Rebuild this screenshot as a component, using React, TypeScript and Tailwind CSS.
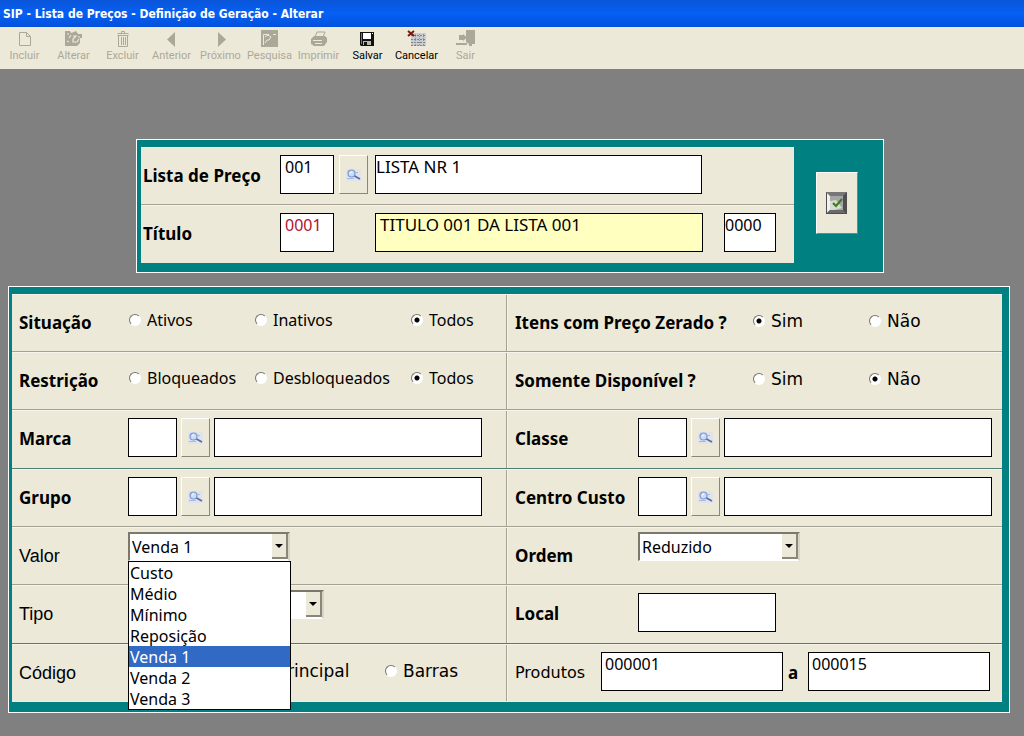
import React, { useState } from "react";

const NOTO = "font-['Noto_Sans',sans-serif]";
const NOTO_RADIO = "font-['Noto_Sans',sans-serif] text-[16px] leading-6";
const DEJAVU_RADIO = "font-['DejaVu_Sans',sans-serif] text-[17px] leading-[26px]";

function PageIcon() {
  return (
    <svg width="16" height="18" viewBox="0 0 16 18" fill="none" stroke="currentColor" aria-hidden="true">
      <path d="M2.5 2.5h7l4 4v9h-11z M9.5 2.5v4h4" />
    </svg>
  );
}

function EditIcon() {
  return (
    <svg width="20" height="18" viewBox="0 0 20 18" aria-hidden="true">
      <path d="M1 1h5l1 2 3-1 2-1 2 3h4v4h-2v5l-3 3H1z" fill="currentColor" />
      <path d="M3 4h2M7 5l-2 3M9 6h3l-3 3v3h4l2-3M3 11l2 1M14 3l2-1M14 7h2" stroke="#ece9d8" strokeWidth="1.2" fill="none" />
    </svg>
  );
}

function TrashIcon() {
  return (
    <svg width="16" height="18" viewBox="0 0 16 18" fill="none" stroke="currentColor" aria-hidden="true">
      <path d="M2.5 3.5h11M2.5 5.5h11M6.5 3.5v-2h3v2M3.500 5.5v11h9v-11M6.5 7v8M8.5 7v8M10.5 7v8" />
    </svg>
  );
}

function PreviousIcon() {
  return (
    <svg width="16" height="18" viewBox="0 0 16 18" fill="currentColor" aria-hidden="true">
      <path d="M11 2v15L3 9.500z" />
    </svg>
  );
}

function NextIcon() {
  return (
    <svg width="16" height="18" viewBox="0 0 16 18" fill="currentColor" aria-hidden="true">
      <path d="M5 2v15l8-7.500z" />
    </svg>
  );
}

function SearchPanelIcon() {
  return (
    <svg width="18" height="18" viewBox="0 0 18 18" aria-hidden="true">
      <path d="M0 0h17v17H0z" fill="currentColor" />
      <path d="M2.500 15V4.500H8M4 7l3-2 3 2-2 3H6l-2 3M12 4.500h3" stroke="#ece9d8" fill="none" />
    </svg>
  );
}

function PrinterIcon() {
  return (
    <svg width="18" height="18" viewBox="0 0 18 18" aria-hidden="true">
      <path d="M5 7l2-5h8l-2 5" fill="#ece9d8" stroke="currentColor" />
      <path d="M1 9l3-3h11l2 2v4l-3 4H4l-3-2z" fill="currentColor" />
      <path d="M3 10.500h9M5 13.500h7M8 4.500h4" stroke="#ece9d8" />
    </svg>
  );
}

function DiskIcon() {
  return (
    <svg width="16" height="18" viewBox="0 0 16 18" aria-hidden="true">
      <path d="M0 2h14v14H1l-1-1z" fill="#111" />
      <path d="M3 3h8v6H3z" fill="#fff" />
      <path d="M3 11h8v4H3z" fill="#b9b9a8" />
      <path d="M4 12h3v3H4z" fill="#111" />
      <path d="M12 3h1v1h-1z" fill="#fff" />
      <path d="M1 3h1v11H1z" fill="#77775f" />
    </svg>
  );
}

function CancelIcon() {
  return (
    <svg width="20" height="18" viewBox="0 0 20 18" aria-hidden="true">
      <path d="M4 3h15v13H4z" fill="#c9cdd2" />
      <path d="M4 5.500h15M4 9.500h15M4 12.500h15M4 15.500h15" stroke="#7d848c" strokeDasharray="2 1" />
      <path d="M8.500 4v12M12.500 4v12M16.500 4v12" stroke="#8f969c" strokeDasharray="1 1" />
      <path d="M1 1l6 5M7 1L1 6" stroke="#7a1712" strokeWidth="2" />
    </svg>
  );
}

function ExitIcon() {
  return (
    <svg width="20" height="18" viewBox="0 0 20 18" fill="currentColor" aria-hidden="true">
      <path d="M10 0h9v14h-3v2h-3v-2l-3-2z" />
      <path d="M3 5h4V4l4 3.500L7 11v-1H3zM0 13h11v2H0z" />
    </svg>
  );
}

function LensIcon() {
  return (
    <svg width="16" height="12" viewBox="0 0 16 12" fill="none" aria-hidden="true">
      <path d="M0 0h15v12H0z" fill="#e2e3e6" />
      <circle cx="5.500" cy="4.500" r="3.500" fill="#c9dcf8" stroke="#7f97d2" strokeWidth="1.200" />
      <path d="M4 4.500a2 2 0 0 1 2-1.500" stroke="#fff" />
      <path d="M8.500 7l5.500 3" stroke="#4f6cb5" strokeWidth="1.700" />
      <path d="M1 9.500h7M9 3.500h3" stroke="#a9b9de" />
    </svg>
  );
}

function CheckIcon() {
  return (
    <svg width="21" height="22" viewBox="0 0 21 22" aria-hidden="true">
      <path d="M0 0h21v22H0z" fill="#4f4f52" />
      <path d="M0 0h21l-4 4H4z" fill="#77777a" />
      <path d="M1 1v20l3-3V4z" fill="#f1f1f1" />
      <path d="M1 21l3-3h13l3 3z" fill="#6a6a6c" />
      <path d="M4 4h13v14H4z" fill="#a4a8a4" />
      <path d="M4 9l6-1 6 8-8 2H4z" fill="#d6dcd0" />
      <path d="M7 11l3 3 6-7" stroke="#3f7d22" strokeWidth="2.200" fill="none" />
    </svg>
  );
}

const tools = [
  { label: "Incluir", icon: <PageIcon />, enabled: false },
  { label: "Alterar", icon: <EditIcon />, enabled: false },
  { label: "Excluir", icon: <TrashIcon />, enabled: false },
  { label: "Anterior", icon: <PreviousIcon />, enabled: false },
  { label: "Próximo", icon: <NextIcon />, enabled: false },
  { label: "Pesquisa", icon: <SearchPanelIcon />, enabled: false },
  { label: "Imprimir", icon: <PrinterIcon />, enabled: false },
  { label: "Salvar", icon: <DiskIcon />, enabled: true },
  { label: "Cancelar", icon: <CancelIcon />, enabled: true },
  { label: "Sair", icon: <ExitIcon />, enabled: false },
];

function Field({
  label,
  value = "",
  size = "text-[16px]",
  className,
}: {
  label: string;
  value?: string;
  size?: string;
  className: string;
}) {
  return (
    <input
      type="text"
      aria-label={label}
      defaultValue={value}
      className={`h-[39px] min-w-0 border border-black pb-4 leading-5 outline-none ${size} ${className}`}
    />
  );
}

function LookupButton({ label, className }: { label: string; className: string }) {
  return (
    <button
      type="button"
      aria-label={label}
      className={`flex h-[39px] w-[29px] shrink-0 items-center justify-center border border-t-white border-r-[#8a877a] border-b-[#8a877a] border-l-white bg-[#ece9d8] ${className}`}
    >
      <LensIcon />
    </button>
  );
}

function RadioGroup({
  name,
  options,
  initial,
  font,
}: {
  name: string;
  options: { label: string; width: string }[];
  initial: string;
  font: string;
}) {
  const [selected, setSelected] = useState(initial);
  return (
    <div role="radiogroup" aria-label={name} className={`flex pt-[13px] pl-px ${font}`}>
      {options.map((option) => (
        <label key={option.label} className={`flex items-center gap-1.5 whitespace-nowrap ${option.width}`}>
          <input
            type="radio"
            name={name}
            checked={selected === option.label}
            onChange={() => setSelected(option.label)}
            className="size-3 shrink-0 appearance-none rounded-full border border-t-[#77756a] border-r-white border-b-white border-l-[#77756a] bg-white checked:bg-[radial-gradient(circle,#000_2px,#fff_3px)]"
          />
          {option.label}
        </label>
      ))}
    </div>
  );
}

function Combo({
  id,
  options,
  width,
  value,
  onSelect,
}: {
  id: string;
  options: string[];
  width: string;
  value: string;
  onSelect?: (value: string) => void;
}) {
  return (
    <div className={`relative mt-1 h-[29px] ${width}`}>
      <select
        id={id}
        value={value}
        onChange={(event) => onSelect?.(event.target.value)}
        className="h-full w-full appearance-none border-t-2 border-r-2 border-b border-l-2 border-t-[#7b796d] border-r-[#d8d4c4] border-b-white border-l-[#7b796d] bg-white pl-0.5 text-[16px] leading-6 outline-none"
      >
        {options.map((option) => (
          <option key={option}>{option}</option>
        ))}
      </select>
      <span className="pointer-events-none absolute top-0.5 right-0.5 bottom-0.5 flex w-4 items-center justify-center border-r-2 border-b-2 border-[#8a877a] bg-[#ece9d8]">
        <svg width="8" height="4" viewBox="0 0 8 4" aria-hidden="true">
          <path d="M0 0h8L4 4z" fill="#000" />
        </svg>
      </span>
    </div>
  );
}

const valueOptions = ["Custo", "Médio", "Mínimo", "Reposição", "Venda 1", "Venda 2", "Venda 3"];

function ValueCombo() {
  const [value, setValue] = useState("Venda 1");
  return (
    <div className="relative">
      <Combo id="valor" options={valueOptions} width="w-[162px]" value={value} onSelect={setValue} />
      <ul
        role="listbox"
        aria-label="Valor"
        className="absolute top-full left-0 z-10 w-[163px] border border-black bg-white"
      >
        {valueOptions.map((option) => (
          <li
            key={option}
            role="option"
            aria-selected={option === value}
            onClick={() => setValue(option)}
            className={`h-[21px] pl-px text-[16px] leading-[23px] ${
              option === value ? "bg-[#316ac5] text-white" : "text-black"
            }`}
          >
            {option}
          </li>
        ))}
      </ul>
    </div>
  );
}

function Row({ left, right, strong = false }: { left: React.ReactNode; right: React.ReactNode; strong?: boolean }) {
  return (
    <div
      className={`grid grid-cols-2 border-t border-b border-t-[#f6f4ea] last:border-b-[#f0eee0] ${
        strong ? "h-[59px] border-b-[#4f7f74]" : "h-[58px] border-b-[#a5a294]"
      }`}
    >
      <div className="flex min-w-0 items-start border-r border-[#a5a294]">{left}</div>
      <div className="flex min-w-0 items-start border-l border-[#f6f4ea]">{right}</div>
    </div>
  );
}

const labelBase = "shrink-0 leading-[56px] whitespace-nowrap";
const boldLabel = `${labelBase} pl-[7px] text-[17px] font-bold`;
const plainLabel = `${labelBase} pl-[7px] font-['Liberation_Sans',sans-serif] text-[18px]`;

function Lookup({ label, labelWidth, endMargin }: { label: string; labelWidth: string; endMargin: string }) {
  return (
    <>
      <span className={`${boldLabel} ${labelWidth}`}>{label}</span>
      <Field label={`${label} código`} className="mt-[7px] w-[49px] shrink-0 bg-white pl-1" />
      <LookupButton label={`Pesquisar ${label}`} className="mx-1 mt-[7px]" />
      <Field label={`${label} descrição`} className={`mt-[7px] flex-1 bg-white pl-1 ${endMargin}`} />
    </>
  );
}

const statusOptions = [
  { label: "Ativos", width: "w-[126px]" },
  { label: "Inativos", width: "w-[156px]" },
  { label: "Todos", width: "" },
];
const restrictionOptions = [
  { label: "Bloqueados", width: "w-[126px]" },
  { label: "Desbloqueados", width: "w-[156px]" },
  { label: "Todos", width: "" },
];
const yesNo = [
  { label: "Sim", width: "w-[116px]" },
  { label: "Não", width: "" },
];
const codeOptions = [
  { label: "Principal", width: "w-[126px]" },
  { label: "Barras", width: "" },
];

export default function App() {
  return (
    <div className={`min-h-screen bg-[#808080] pb-5 text-black ${NOTO}`}>
      <header className="flex h-[27px] items-center bg-linear-to-b from-[#0a55d8] via-[#0560f4] to-[#0350dc] pl-[3px]">
        <h1 className="font-['DejaVu_Sans_Condensed','DejaVu_Sans',sans-serif] text-[12px] leading-4 font-bold whitespace-nowrap text-white">
          SIP - Lista de Preços - Definição de Geração - Alterar
        </h1>
      </header>

      <nav aria-label="Ferramentas" className="flex h-[42px] bg-[#ece9d8]">
        {tools.map((tool) => (
          <button
            key={tool.label}
            type="button"
            disabled={!tool.enabled}
            className={`flex w-[49px] flex-col items-center gap-px pt-[3px] font-[Roboto,sans-serif] text-[11px] leading-[14px] ${
              tool.enabled ? "text-black" : "text-[#aca899]"
            }`}
          >
            {tool.icon}
            {tool.label}
          </button>
        ))}
      </nav>

      <main className="flex flex-col gap-[13px] pt-[70px] pr-[14px] pl-2">
        <div className="flex justify-center pl-0.5">
          <section className="flex w-full max-w-[748px] border border-white bg-[#008080] pt-[7px] pb-[9px] pl-1">
            <div className="min-w-0 flex-1 bg-[#ece9d8]">
              <div className="flex h-[58px] items-start border-t border-b border-t-[#f6f4ea] border-b-[#a5a294]">
                <span className={`${labelBase} w-[139px] pl-0.5 text-[17px] font-bold`}>Lista de Preço</span>
                <Field label="Lista de Preço código" value="001" className="mt-[7px] w-[54px] bg-white pl-1" />
                <LookupButton label="Pesquisar lista" className="mt-[7px] mr-[7px] ml-[5px]" />
                <Field
                  label="Lista de Preço nome"
                  value="LISTA NR 1"
                  size="text-[17px]"
                  className="mt-[7px] mr-[92px] flex-1 bg-white"
                />
              </div>
              <div className="flex h-[58px] items-start border-t border-[#f6f4ea]">
                <span className={`${labelBase} w-[139px] pl-0.5 text-[17px] font-bold`}>Título</span>
                <Field label="Título código" value="0001" className="mt-[7px] w-[54px] bg-white pl-1 text-[#b3122a]" />
                <Field
                  label="Título nome"
                  value="TITULO 001 DA LISTA 001"
                  size="text-[17px]"
                  className="mt-[7px] mr-[21px] ml-[41px] flex-1 bg-[#ffffc0] pl-1"
                />
                <Field label="Título complemento" value="0000" className="mt-[7px] mr-[18px] w-[52px] bg-white" />
              </div>
            </div>
            <div className="flex w-[89px] shrink-0 items-center justify-center pr-1 pb-1">
              <button
                type="button"
                aria-label="Confirmar"
                className="flex h-[62px] w-[42px] items-center justify-center border border-t-white border-r-[#6d8a80] border-b-[#6d8a80] border-l-white bg-[#ece9d8]"
              >
                <CheckIcon />
              </button>
            </div>
          </section>
        </div>

        <section className="border border-white bg-[#008080] pt-[7px] pr-[7px] pb-2.5 pl-[3px]">
          <div className="bg-[#ece9d8]">
            <Row
              left={
                <>
                  <span className={`${boldLabel} w-[116px]`}>Situação</span>
                  <RadioGroup name="Situação" options={statusOptions} initial="Todos" font={NOTO_RADIO} />
                </>
              }
              right={
                <>
                  <span className={`${boldLabel} w-[244px]`}>Itens com Preço Zerado ?</span>
                  <RadioGroup name="Itens com Preço Zerado" options={yesNo} initial="Sim" font={DEJAVU_RADIO} />
                </>
              }
            />
            <Row
              left={
                <>
                  <span className={`${boldLabel} w-[116px]`}>Restrição</span>
                  <RadioGroup name="Restrição" options={restrictionOptions} initial="Todos" font={NOTO_RADIO} />
                </>
              }
              right={
                <>
                  <span className={`${boldLabel} w-[244px]`}>Somente Disponível ?</span>
                  <RadioGroup name="Somente Disponível" options={yesNo} initial="Não" font={DEJAVU_RADIO} />
                </>
              }
            />
            <Row
              strong
              left={<Lookup label="Marca" labelWidth="w-[116px]" endMargin="mr-6" />}
              right={<Lookup label="Classe" labelWidth="w-[130px]" endMargin="mr-2.5" />}
            />
            <Row
              left={<Lookup label="Grupo" labelWidth="w-[116px]" endMargin="mr-6" />}
              right={<Lookup label="Centro Custo" labelWidth="w-[130px]" endMargin="mr-2.5" />}
            />
            <Row
              left={
                <>
                  <label htmlFor="valor" className={`${plainLabel} w-[116px]`}>
                    Valor
                  </label>
                  <ValueCombo />
                </>
              }
              right={
                <>
                  <label htmlFor="ordem" className={`${boldLabel} w-[130px]`}>
                    Ordem
                  </label>
                  <Combo id="ordem" options={["Reduzido"]} value="Reduzido" width="w-[162px]" />
                </>
              }
            />
            <Row
              strong
              left={
                <>
                  <label htmlFor="tipo" className={`${plainLabel} w-[116px]`}>
                    Tipo
                  </label>
                  <Combo id="tipo" options={[""]} value="" width="w-[196px]" />
                </>
              }
              right={
                <>
                  <span className={`${boldLabel} w-[130px]`}>Local</span>
                  <Field label="Local" className="mt-[7px] w-[138px] bg-white pl-1" />
                </>
              }
            />
            <Row
              left={
                <>
                  <span className={`${plainLabel} w-[246px]`}>Código</span>
                  <RadioGroup name="Código" options={codeOptions} initial="Principal" font={DEJAVU_RADIO} />
                </>
              }
              right={
                <>
                  <span className={`${labelBase} w-[93px] pl-[7px] font-['DejaVu_Sans',sans-serif] text-[16px]`}>
                    Produtos
                  </span>
                  <Field label="Produto inicial" value="000001" className="mt-[7px] flex-1 bg-white pl-[3px]" />
                  <span className={`${labelBase} w-[25px] pl-[5px] text-[17px] font-bold`}>a</span>
                  <Field label="Produto final" value="000015" className="mt-[7px] mr-3 flex-1 bg-white pl-[3px]" />
                </>
              }
            />
          </div>
        </section>
      </main>
    </div>
  );
}
